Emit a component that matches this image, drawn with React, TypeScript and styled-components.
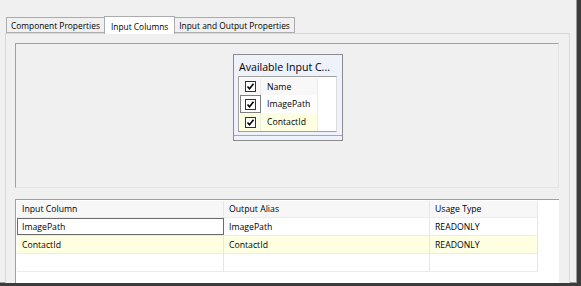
import React from 'react';
import styled, { createGlobalStyle } from 'styled-components';

const GlobalStyle = createGlobalStyle`
  html, body { margin: 0; padding: 0; background: #f0f0f0; }
  body { font-family: "Open Sans", "Noto Sans", sans-serif; font-size: 8.7px; color: #000; }
`;

type Row = { input: string; alias: string; usage: string; highlight?: boolean; focused?: boolean };

const rows: Row[] = [
  { input: 'ImagePath', alias: 'ImagePath', usage: 'READONLY', focused: true },
  { input: 'ContactId', alias: 'ContactId', usage: 'READONLY', highlight: true },
  { input: '', alias: '', usage: '' },
];

const columns = ['ImagePath', 'ContactId'];

const CheckBox: React.FC = () => (
  <svg width="11" height="11" viewBox="0 0 11 11">
    <rect x="0.5" y="0.5" width="10" height="10" fill="#fff" stroke="#333" />
    <path d="M2.5 5.5 L4.5 7.8 L8.5 2.8" fill="none" stroke="#000" strokeWidth="1.6" />
  </svg>
);

const App: React.FC = () => (
  <Window>
    <GlobalStyle />
    <TabStrip>
      <Tab>Component Properties</Tab>
      <Tab active>Input Columns</Tab>
      <Tab>Input and Output Properties</Tab>
    </TabStrip>
    <Panel>
      <Designer>
        <ColumnsBox>
          <BoxTitle>Available Input C...</BoxTitle>
          <List>
            <ListRow header>
              <CheckCell><CheckBox /></CheckCell>
              <NameCell>Name</NameCell>
            </ListRow>
            {columns.map((c, i) => (
              <ListRow key={c} highlight={i === 1}>
                <CheckCell focused={i === 0}><CheckBox /></CheckCell>
                <NameCell>{c}</NameCell>
              </ListRow>
            ))}
          </List>
          <BoxFooter />
        </ColumnsBox>
      </Designer>
      <Grid>
        <GridRow header>
          <Cell w={207}>Input Column</Cell>
          <Cell w={206}>Output Alias</Cell>
          <Cell w={108}>Usage Type</Cell>
        </GridRow>
        {rows.map((r, i) => (
          <GridRow key={i} highlight={r.highlight}>
            <Cell w={207} focused={r.focused}>{r.input}</Cell>
            <Cell w={206}>{r.alias}</Cell>
            <Cell w={108}>{r.usage}</Cell>
          </GridRow>
        ))}
      </Grid>
    </Panel>
  </Window>
);

const Window = styled.div`
  width: 581px;
  height: 286px;
  box-sizing: border-box;
  overflow: hidden;
  padding: 16px 0 0 5px;
  border-right: 4px solid #3c3c3c;
  border-bottom: 3px solid #3c3c3c;
  box-shadow: inset -1px -1px 0 #9a9a9a;
`;

const TabStrip = styled.div`
  display: flex;
  height: 17px;
  align-items: flex-end;
  padding-left: 1px;
  position: relative;
  z-index: 1;
`;

const Tab = styled.div<{ active?: boolean }>`
  box-sizing: border-box;
  height: ${p => (p.active ? 18 : 16)}px;
  padding: 1px ${p => (p.active ? 6 : 4)}px 0;
  margin: 0 ${p => (p.active ? -1 : 0)}px;
  border: 1px solid #acacac;
  border-bottom: ${p => (p.active ? 'none' : '1px solid #acacac')};
  background: ${p => (p.active ? '#fff' : '#f0f0f0')};
  font-size: 8.4px;
  display: flex;
  align-items: center;
  white-space: nowrap;
  ${p => (p.active ? 'position: relative; z-index: 2; margin-bottom: -1px;' : '')}
`;

const Panel = styled.div`
  box-sizing: border-box;
  width: 565px;
  height: 260px;
  border: 1px solid #d9d9d9;
  background: #f0f0f0;
  padding: 9px 10px 0 9px;
  display: flex;
  flex-direction: column;
  gap: 11px;
`;

const Designer = styled.div`
  height: 145px;
  box-sizing: border-box;
  border-top: 1px solid #a0a0a0;
  border-left: 1px solid #a0a0a0;
  border-right: 1px solid #e3e3e3;
  border-bottom: 1px solid #e3e3e3;
  display: flex;
  justify-content: center;
  align-items: flex-start;
  padding-top: 10px;
`;

const ColumnsBox = styled.div`
  width: 110px;
  height: 87px;
  box-sizing: border-box;
  border: 1px solid #8c8c8c;
  background: #eef2fb;
  display: flex;
  flex-direction: column;
  margin-left: 2px;
`;

const BoxTitle = styled.div`
  height: 21px;
  padding: 5px 0 0 5px;
  box-sizing: border-box;
  font-size: 10.6px;
  line-height: 14px;
  white-space: nowrap;
  overflow: hidden;
`;

const List = styled.div`
  margin: 0 5px 0 4px;
  height: 56px;
  box-sizing: border-box;
  background: #fff;
  border-top: 1px solid #a0a0a0;
  border-left: 1px solid #a0a0a0;
  border-right: 1px solid #dcdcdc;
  border-bottom: 1px solid #a0a0a0;
  padding: 1px 0 0 1px;
`;

const ListRow = styled.div<{ header?: boolean; highlight?: boolean }>`
  display: flex;
  width: 78px;
  height: ${p => (p.header ? 17 : 18)}px;
  background: ${p => (p.highlight ? '#ffffe1' : p.header ? '#f8f8f8' : '#fff')};
`;

const CheckCell = styled.div<{ focused?: boolean }>`
  width: 21px;
  box-sizing: border-box;
  display: flex;
  align-items: center;
  justify-content: center;
  border-right: 1px solid #ececec;
  border: ${p => (p.focused ? '1px solid #808080' : '')};
`;

const NameCell = styled.div`
  flex: 1;
  display: flex;
  align-items: center;
  padding-left: 6px;
  border-right: 1px solid #ececec;
`;

const BoxFooter = styled.div`
  margin-top: 3px;
  height: 3px;
  border-top: 1px solid #a8a8a8;
`;

const Grid = styled.div`
  flex: 1;
  background: #fff;
  border-top: 1px solid #a0a0a0;
  border-left: 1px solid #a0a0a0;
  padding: 1px 0 0 1px;
`;

const GridRow = styled.div<{ header?: boolean; highlight?: boolean }>`
  display: flex;
  height: ${p => (p.header ? 17 : 18)}px;
  width: 521px;
  background: ${p => (p.highlight ? '#ffffe1' : p.header ? '#f7f7f7' : '#fff')};
  border-bottom: 1px solid #ececec;
  box-sizing: border-box;
`;

const Cell = styled.div<{ w: number; focused?: boolean }>`
  width: ${p => p.w}px;
  box-sizing: border-box;
  display: flex;
  align-items: center;
  padding-left: 5px;
  border-right: 1px solid #e6e6e6;
  ${p => (p.focused ? 'border: 1px solid #6b6b6b; padding-left: 4px;' : '')}
`;

export default App;
